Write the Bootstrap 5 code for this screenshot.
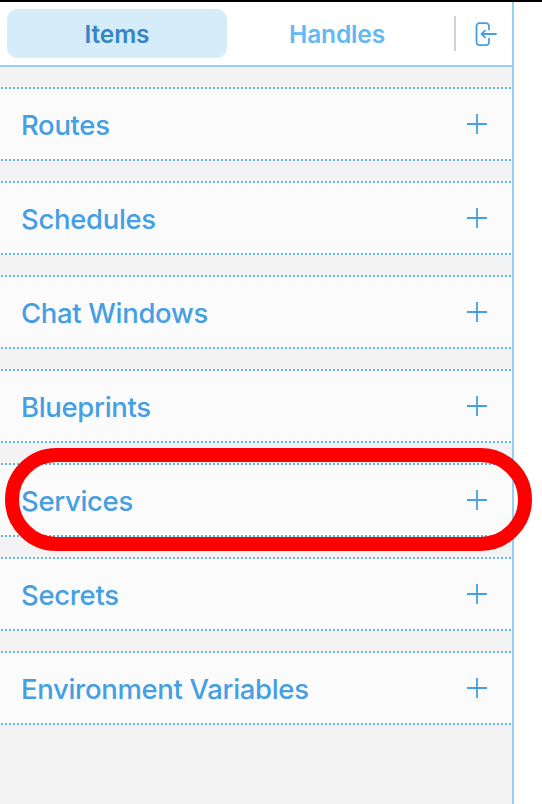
<!DOCTYPE html>
<html lang="en">
<head>
<meta charset="utf-8">
<meta name="viewport" content="width=device-width, initial-scale=1">
<title>Items</title>
<link href="https://cdn.jsdelivr.net/npm/bootstrap@5.3.0/dist/css/bootstrap.min.css" rel="stylesheet">
<style>
body{font-family:Inter,"Liberation Sans",sans-serif;background:#fff;overflow:hidden}
.screen{height:804px;border-top:2px solid #000}
.side-panel{width:514px;border-right:2px solid #96cff3;background:#f3f3f3}
.panel-head{height:65px;border-bottom:2px solid #96cff3;padding:7px 0 7px 7px}
.tab-btn{width:220px;height:49px;border-radius:10px;font-size:24.5px;line-height:49px;font-weight:600;letter-spacing:-.15px;color:#62b9f3;padding:1px 0 0;border:0}
.tab-btn.active,.tab-btn.active:hover{background:#d5ecf9;color:#3785c6}
.sep{width:2px;height:35px;background:#d1d1d6;margin:0 18px 0 7px}
.sections{padding-top:20px;gap:20px}
.section-row{height:74px;padding:2px 24px 0 21px;color:#459fe2;font-size:27.5px;font-weight:450;letter-spacing:-.33px;line-height:36px;
background:repeating-linear-gradient(90deg,transparent 0 1px,#63b3e6 1px 3px,transparent 3px 4px) 0 0/100% 2px no-repeat,repeating-linear-gradient(90deg,transparent 0 1px,#63b3e6 1px 3px,transparent 3px 4px) 0 100%/100% 2px no-repeat,#fbfbfb}
.highlight-ring{left:5px;top:448px;width:527px;height:103px;border:14px solid #f00;border-radius:52px;pointer-events:none}
</style>
</head>
<body>
<div class="screen">
<aside class="side-panel d-flex flex-column h-100">
<header class="panel-head d-flex align-items-start bg-white">
<button class="btn tab-btn active">Items</button>
<button class="btn tab-btn">Handles</button>
<div class="sep align-self-center"></div>
<svg class="align-self-center" width="24" height="26" viewBox="0 0 24 26" fill="none" stroke="#459fe2" stroke-width="1.8" stroke-linecap="round" stroke-linejoin="round"><path d="M15 8.500V5.200a3 3 0 0 0-3-3H5.500a3 3 0 0 0-3 3v16a3 3 0 0 0 3 3H12a3 3 0 0 0 3-3V17.700M22 13H7.500M11 9.600 7.500 13l3.500 3.400"/></svg>
</header>
<main class="sections d-flex flex-column">
<div class="section-row d-flex align-items-center justify-content-between"><span>Routes</span><svg width="22" height="22" viewBox="0 0 22 22" stroke="#459fe2" stroke-width="1.8"><path d="M1 10H21M11 0V20"/></svg></div>
<div class="section-row d-flex align-items-center justify-content-between"><span>Schedules</span><svg width="22" height="22" viewBox="0 0 22 22" stroke="#459fe2" stroke-width="1.8"><path d="M1 10H21M11 0V20"/></svg></div>
<div class="section-row d-flex align-items-center justify-content-between"><span>Chat Windows</span><svg width="22" height="22" viewBox="0 0 22 22" stroke="#459fe2" stroke-width="1.8"><path d="M1 10H21M11 0V20"/></svg></div>
<div class="section-row d-flex align-items-center justify-content-between"><span>Blueprints</span><svg width="22" height="22" viewBox="0 0 22 22" stroke="#459fe2" stroke-width="1.8"><path d="M1 10H21M11 0V20"/></svg></div>
<div class="section-row d-flex align-items-center justify-content-between"><span>Services</span><svg width="22" height="22" viewBox="0 0 22 22" stroke="#459fe2" stroke-width="1.8"><path d="M1 10H21M11 0V20"/></svg></div>
<div class="section-row d-flex align-items-center justify-content-between"><span>Secrets</span><svg width="22" height="22" viewBox="0 0 22 22" stroke="#459fe2" stroke-width="1.8"><path d="M1 10H21M11 0V20"/></svg></div>
<div class="section-row d-flex align-items-center justify-content-between"><span>Environment Variables</span><svg width="22" height="22" viewBox="0 0 22 22" stroke="#459fe2" stroke-width="1.8"><path d="M1 10H21M11 0V20"/></svg></div>
</main>
</aside>
</div>
<div class="highlight-ring position-absolute"></div>
<script src="https://cdn.jsdelivr.net/npm/bootstrap@5.3.0/dist/js/bootstrap.bundle.min.js"></script>
</body>
</html>
